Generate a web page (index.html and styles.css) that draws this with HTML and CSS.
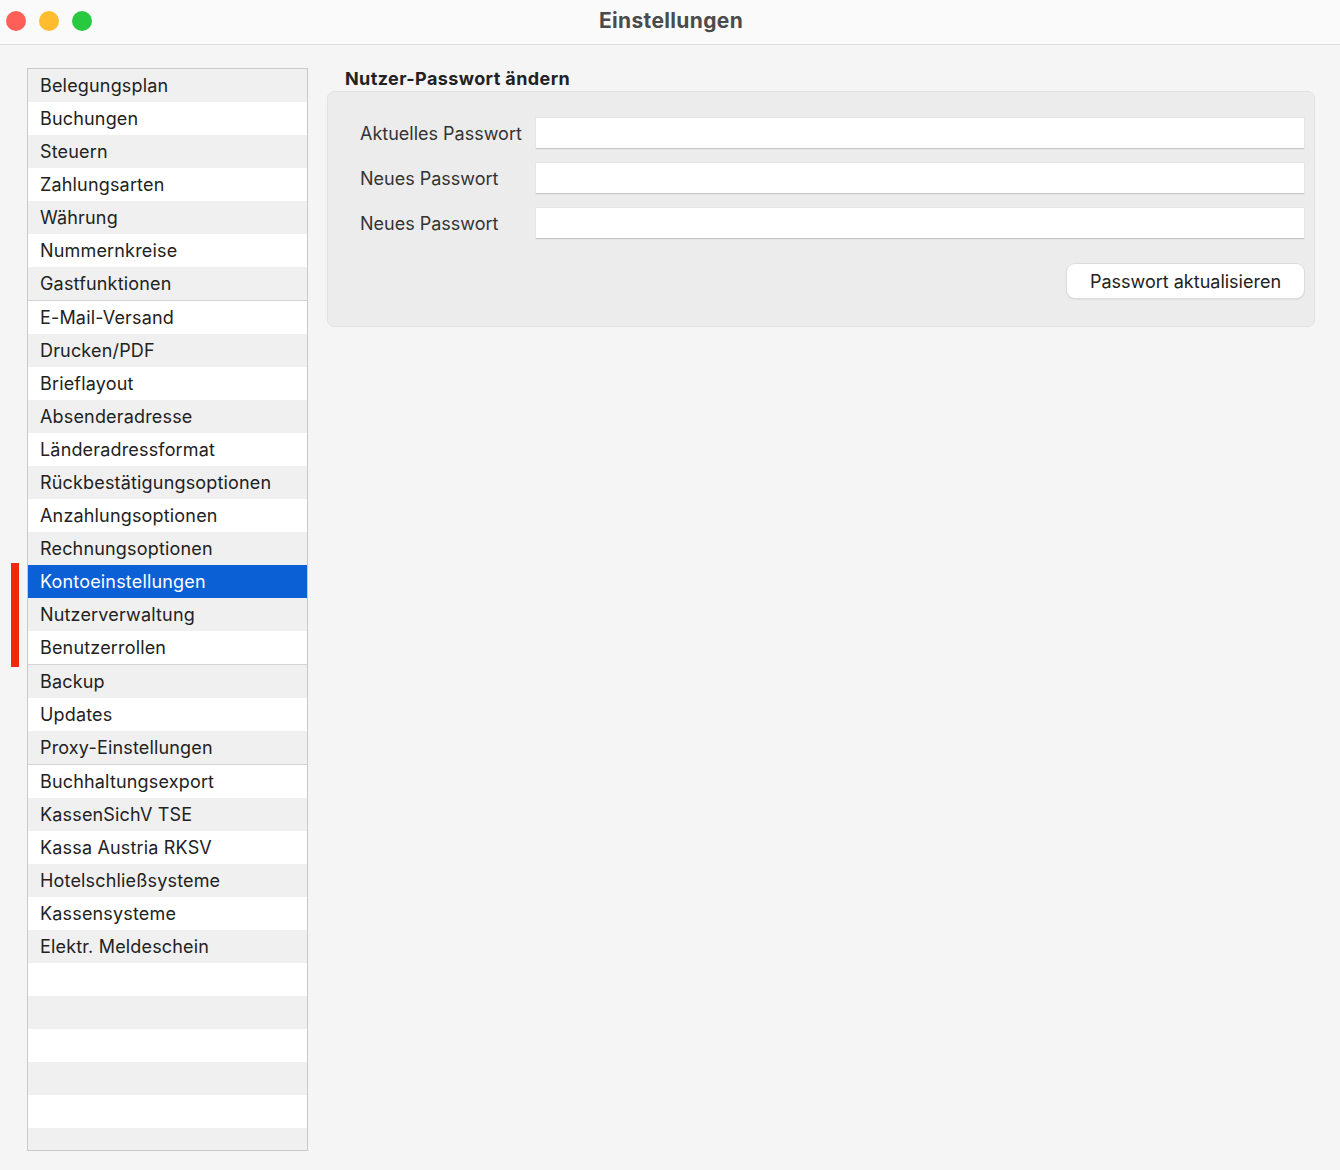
FILE: index.html
```html
<!DOCTYPE html>
<html lang="de">
<head>
<meta charset="utf-8">
<title>Einstellungen</title>
<link rel="stylesheet" href="styles.css">
</head>
<body>
<div class="window">
  <header class="titlebar">
    <div class="lights">
      <span class="light red"></span>
      <span class="light yellow"></span>
      <span class="light green"></span>
    </div>
    <div class="title">Einstellungen</div>
    <div></div>
  </header>
  <div class="content">
    <div class="marker"></div>
    <ul class="sidebar">
      <li>Belegungsplan</li>
      <li>Buchungen</li>
      <li>Steuern</li>
      <li>Zahlungsarten</li>
      <li>Währung</li>
      <li>Nummernkreise</li>
      <li class="sep">Gastfunktionen</li>
      <li>E-Mail-Versand</li>
      <li>Drucken/PDF</li>
      <li>Brieflayout</li>
      <li>Absenderadresse</li>
      <li>Länderadressformat</li>
      <li>Rückbestätigungsoptionen</li>
      <li>Anzahlungsoptionen</li>
      <li>Rechnungsoptionen</li>
      <li class="selected">Kontoeinstellungen</li>
      <li>Nutzerverwaltung</li>
      <li class="sep">Benutzerrollen</li>
      <li>Backup</li>
      <li>Updates</li>
      <li class="sep">Proxy-Einstellungen</li>
      <li>Buchhaltungsexport</li>
      <li>KassenSichV TSE</li>
      <li>Kassa Austria RKSV</li>
      <li>Hotelschließsysteme</li>
      <li>Kassensysteme</li>
      <li>Elektr. Meldeschein</li>
      <li class="empty"></li>
      <li class="empty"></li>
      <li class="empty"></li>
      <li class="empty"></li>
      <li class="empty"></li>
      <li class="empty"></li>
    </ul>
    <main class="main">
      <h2 class="heading">Nutzer-Passwort ändern</h2>
      <section class="panel">
        <div class="form">
          <label class="label">Aktuelles Passwort</label>
          <div class="input"></div>
          <label class="label">Neues Passwort</label>
          <div class="input"></div>
          <label class="label">Neues Passwort</label>
          <div class="input"></div>
        </div>
        <div class="actions">
          <button class="button">Passwort aktualisieren</button>
        </div>
      </section>
    </main>
  </div>
</div>
</body>
</html>
```

FILE: styles.css
```css
* { box-sizing: border-box; }
html, body { margin: 0; padding: 0; }
body {
  width: 1340px;
  height: 1170px;
  background: #f5f5f5;
  font-family: Inter, "Noto Sans", sans-serif;
  color: #222;
  overflow: hidden;
}
.window { width: 1340px; height: 1170px; }

.titlebar {
  height: 45px;
  background: #fafafa;
  border-bottom: 1px solid #dedede;
  display: grid;
  grid-template-columns: 1fr auto 1fr;
  align-items: center;
}
.lights {
  display: flex;
  gap: 13px;
  padding-left: 6px;
  padding-bottom: 3px;
}
.light {
  width: 20px;
  height: 20px;
  border-radius: 50%;
  display: block;
}
.red { background: #fe5f57; }
.yellow { background: #febc2e; }
.green { background: #28c840; }
.title {
  font-size: 21px;
  font-weight: 700;
  letter-spacing: 0.35px;
  color: #4b4b4b;
  padding-bottom: 4px;
  padding-left: 2px;
}

.content {
  position: relative;
  display: flex;
  align-items: flex-start;
  gap: 19px;
  padding: 23px 25px 0 27px;
}
.marker {
  position: absolute;
  left: 11px;
  top: 518px;
  width: 8px;
  height: 104px;
  background: #ee2a0c;
}

.sidebar {
  list-style: none;
  margin: 0;
  padding: 0;
  width: 281px;
  height: 1083px;
  flex: none;
  border: 1px solid #c9c9c9;
  overflow: hidden;
  background: #fff;
}
.sidebar li {
  height: 33px;
  line-height: 33px;
  padding-left: 12px;
  font-size: 18px;
  letter-spacing: 0.17px;
  color: #222;
  background: #fff;
  white-space: nowrap;
}
.sidebar li:nth-child(odd) { background: #f0f0f0; }
.sidebar li.sep {
  height: 34px;
  border-bottom: 1px solid #d4d4d4;
}
.sidebar li.selected {
  background: #0b60d6;
  color: #fff;
}

.main {
  flex: 1;
  display: flex;
  flex-direction: column;
}
.heading {
  margin: 0;
  padding-left: 18px;
  font-size: 18px;
  font-weight: 700;
  letter-spacing: 0.4px;
  line-height: 22px;
  color: #222;
  margin-top: 0;
}
.panel {
  margin-top: 1px;
  background: #ececec;
  border: 1px solid #e2e2e2;
  border-radius: 7px;
  height: 236px;
  padding: 26px 10px 0 32px;
}
.form {
  display: grid;
  grid-template-columns: 176px 1fr;
  row-gap: 14px;
  align-items: center;
}
.label {
  font-size: 18px;
  color: #333;
}
.input {
  height: 31px;
  background: #fff;
  border-bottom: 1px solid #c6c6c6;
  box-shadow: 0 0 0 1px #e6e6e6;
}
.actions {
  display: flex;
  justify-content: flex-end;
  margin-top: 25px;
}
.button {
  width: 237px;
  height: 34px;
  border: none;
  border-radius: 8px;
  background: #fff;
  box-shadow: 0 0 0 1px #dcdcdc, 0 1px 2px rgba(0,0,0,0.18);
  font-family: Inter, "Noto Sans", sans-serif;
  font-size: 18px;
  color: #222;
  padding: 0;
}
```
